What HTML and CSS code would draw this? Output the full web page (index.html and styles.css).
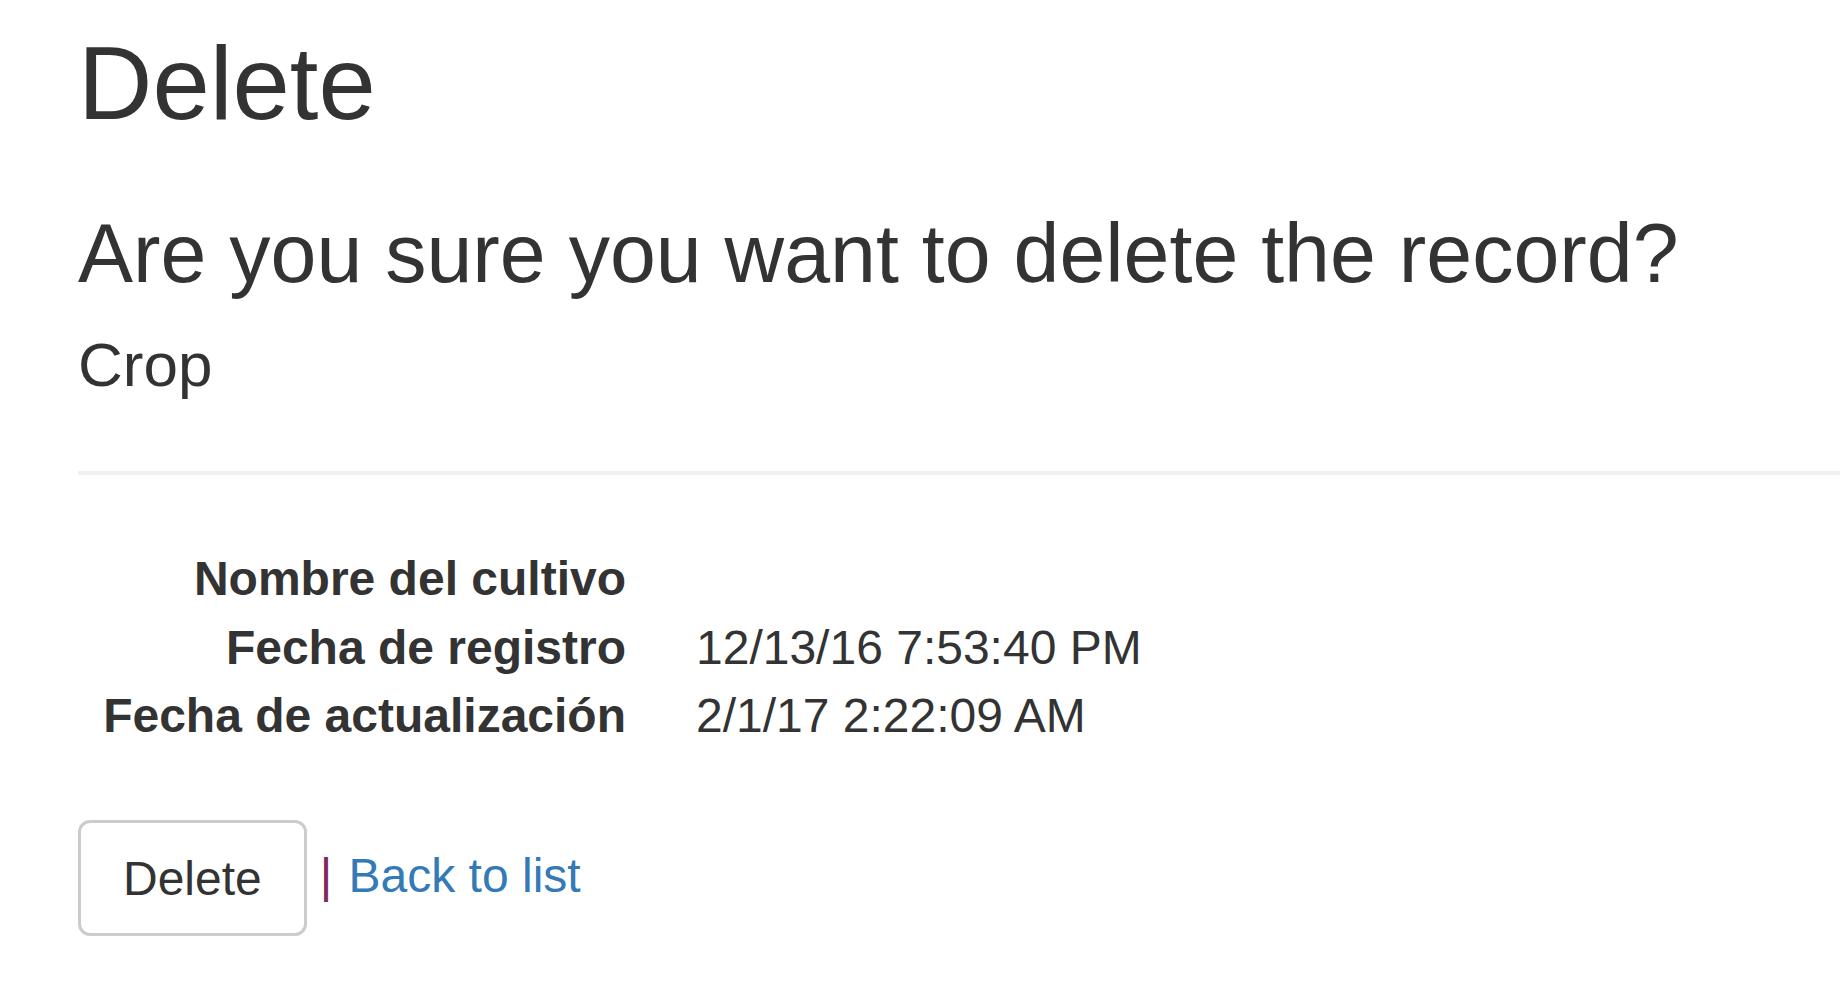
FILE: index.html
```html
<!DOCTYPE html>
<html lang="en">
<head>
<meta charset="utf-8">
<title>Delete</title>
<link rel="stylesheet" href="styles.css">
</head>
<body>
<div class="page">
  <h1 class="title">Delete</h1>
  <h2 class="question">Are you sure you want to delete the record?</h2>
  <div class="entity">
    <h4 class="entity-name">Crop</h4>
    <hr class="rule">
    <dl class="details">
      <dt>Nombre del cultivo</dt>
      <dd></dd>
      <dt>Fecha de registro</dt>
      <dd>12/13/16 7:53:40 PM</dd>
      <dt>Fecha de actualización</dt>
      <dd>2/1/17 2:22:09 AM</dd>
    </dl>
    <form class="actions">
      <button type="button" class="btn">Delete</button>
      <span class="back"><span class="sep">|</span> <a href="#" class="link">Back to list</a></span>
    </form>
  </div>
</div>
</body>
</html>
```

FILE: styles.css
```css
html, body {
  margin: 0;
  padding: 0;
  background: #ffffff;
}

.page {
  padding: 0 0 0 78px;
  font-family: "Liberation Sans", Arial, sans-serif;
  font-size: 48px;
  color: #333333;
}

.title {
  font-size: 103px;
  font-weight: normal;
  line-height: 113px;
  margin: 27px 0 0;
}

.question {
  font-size: 82.5px;
  font-weight: normal;
  line-height: 90px;
  margin: 68px 0 0;
}

.entity-name {
  font-size: 62px;
  font-weight: normal;
  line-height: 67px;
  margin: 33px 0 0;
}

.rule {
  margin: 73px 0 0;
  border: 0;
  border-top: 4px solid #f0f0f0;
  height: 0;
}

.details {
  display: grid;
  grid-template-columns: 548px 1fr;
  column-gap: 70px;
  margin: 70px 0 0;
  line-height: 68.5px;
}

.details dt {
  font-weight: bold;
  text-align: right;
  margin: 0;
}

.details dd {
  margin: 0;
}

.actions {
  display: flex;
  align-items: center;
  margin: 69px 0 0;
}

.btn {
  font-family: "Liberation Sans", Arial, sans-serif;
  font-size: 48px;
  color: #333333;
  background: #ffffff;
  border: 3px solid #cccccc;
  border-radius: 12px;
  padding: 2px 42px 0;
  line-height: 108px;
  margin: 0;
}

.back {
  margin-left: 13px;
  margin-bottom: 4px;
  line-height: normal;
}

.sep {
  color: #80275e;
}

.link {
  color: #337ab7;
  text-decoration: none;
  margin-left: 3px;
}
```
